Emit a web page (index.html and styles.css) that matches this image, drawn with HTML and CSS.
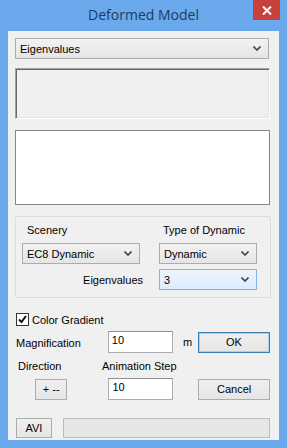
FILE: index.html
```html
<!DOCTYPE html>
<html lang="en">
<head>
    <meta charset="UTF-8">
    <title>Deformed Model</title>
    <link rel="stylesheet" href="styles.css">
</head>
<body>
    <div class="window">
        <div class="titlebar">
            <span class="title">Deformed Model</span>
            <div class="close">
                <svg width="10" height="9" viewBox="0 0 10 9"><path d="M1 0.5 L9 8.5 M9 0.5 L1 8.5" stroke="#fff" stroke-width="2"/></svg>
            </div>
        </div>
        <div class="client">
            <div class="combo combo-wide">
                <span>Eigenvalues</span>
                <svg class="chev" width="8" height="5" viewBox="0 0 8 5"><path d="M0.5 0.5 L4 4 L7.5 0.5" stroke="#444" stroke-width="1.6" fill="none"/></svg>
            </div>

            <div class="sunken"></div>

            <div class="listbox"></div>

            <div class="group">
                <div class="group-grid">
                    <span class="lbl lbl-scenery">Scenery</span>
                    <span class="lbl lbl-type">Type of Dynamic</span>
                    <div class="combo">
                        <span>EC8 Dynamic</span>
                        <svg class="chev" width="8" height="5" viewBox="0 0 8 5"><path d="M0.5 0.5 L4 4 L7.5 0.5" stroke="#444" stroke-width="1.6" fill="none"/></svg>
                    </div>
                    <div class="combo">
                        <span>Dynamic</span>
                        <svg class="chev" width="8" height="5" viewBox="0 0 8 5"><path d="M0.5 0.5 L4 4 L7.5 0.5" stroke="#444" stroke-width="1.6" fill="none"/></svg>
                    </div>
                    <span class="lbl lbl-eigen">Eigenvalues</span>
                    <div class="combo combo-focus">
                        <span>3</span>
                        <svg class="chev" width="8" height="5" viewBox="0 0 8 5"><path d="M0.5 0.5 L4 4 L7.5 0.5" stroke="#444" stroke-width="1.6" fill="none"/></svg>
                    </div>
                </div>
            </div>

            <div class="check-row">
                <span class="checkbox">
                    <svg width="11" height="11" viewBox="0 0 11 11"><path d="M2 5.5 L4.5 8 L9 2" stroke="#111" stroke-width="2" fill="none"/></svg>
                </span>
                <span>Color Gradient</span>
            </div>

            <div class="row row-mag">
                <span class="lbl-mag">Magnification</span>
                <div class="textbox">10</div>
                <span class="unit">m</span>
                <div class="btn btn-default">OK</div>
            </div>

            <div class="row row-labels">
                <span class="lbl-dir">Direction</span>
                <span class="lbl-step">Animation Step</span>
            </div>

            <div class="row row-btns">
                <div class="btn btn-dir">+ --</div>
                <div class="textbox">10</div>
                <div class="btn btn-cancel">Cancel</div>
            </div>

            <div class="row row-avi">
                <div class="btn btn-avi">AVI</div>
                <div class="progress"></div>
            </div>
        </div>
    </div>
</body>
</html>
```

FILE: styles.css
```css
* {
    margin: 0;
    padding: 0;
    box-sizing: border-box;
}

body {
    background: #6aa9ec;
    font-family: 'Liberation Sans', Arial, sans-serif;
    font-size: 11px;
    color: #000;
}

.window {
    width: 287px;
    height: 448px;
    background: #6aa9ec;
    display: flex;
    flex-direction: column;
}

.titlebar {
    height: 31px;
    position: relative;
    display: flex;
    justify-content: center;
    align-items: center;
    padding-bottom: 2px;
}

.title {
    font-family: 'Open Sans', 'Noto Sans', sans-serif;
    font-size: 14px;
    color: #1f3b5e;
}

.close {
    position: absolute;
    top: 0;
    right: 7px;
    width: 27px;
    height: 20px;
    background: #c7423d;
    display: flex;
    justify-content: center;
    align-items: center;
}

.client {
    flex: 1;
    margin: 0 8px 8px;
    background: #f0f0f0;
    padding: 7px 9px 0 7px;
    display: flex;
    flex-direction: column;
}

/* combo boxes */
.combo {
    height: 21px;
    border: 1px solid #acacac;
    background: linear-gradient(#f2f2f2, #e5e5e5);
    display: flex;
    align-items: center;
    justify-content: space-between;
    padding: 0 7px 0 4px;
}

.combo-wide {
    width: 254px;
}

.combo-focus {
    border-color: #7eb4ea;
    background: linear-gradient(#ecf4fc, #dcecfc);
}

.chev {
    display: block;
}

.sunken {
    width: 255px;
    height: 51px;
    margin-top: 9px;
    border: 1px solid;
    border-color: #a0a0a0 #ffffff #ffffff #a0a0a0;
    box-shadow: inset 1px 1px #696969, inset -1px -1px #e3e3e3;
}

.listbox {
    width: 255px;
    height: 75px;
    margin-top: 11px;
    background: #fff;
    border: 1px solid #828790;
}

/* group box */
.group {
    width: 256px;
    height: 82px;
    margin-top: 11px;
    border: 1px solid #dcdcdc;
    border-radius: 2px;
    padding: 4px 0 0 6px;
}

.group-grid {
    display: grid;
    grid-template-columns: 118px 98px;
    grid-template-rows: 17px 21px 21px;
    column-gap: 19px;
    row-gap: 5px;
    align-items: center;
}

.lbl-scenery {
    padding-left: 5px;
}

.lbl-type {
    padding-left: 4px;
}

.lbl-eigen {
    text-align: right;
    margin-right: -3px;
}

/* lower controls */
.check-row {
    display: flex;
    align-items: center;
    margin-top: 15px;
    padding-left: 1px;
    height: 13px;
}

.checkbox {
    width: 13px;
    height: 13px;
    border: 1px solid #333;
    background: #fff;
    display: flex;
    justify-content: center;
    align-items: center;
    margin-right: 3px;
}

.row {
    display: flex;
    align-items: center;
}

.textbox {
    width: 66px;
    height: 22px;
    background: #fff;
    border: 1px solid #abadb3;
    border-top-color: #8e8f8f;
    padding: 2px 0 0 3px;
    align-self: flex-start;
}

.btn {
    height: 21px;
    border: 1px solid #acacac;
    background: linear-gradient(#f0f0f0, #e5e5e5);
    display: flex;
    justify-content: center;
    align-items: center;
}

.btn-default {
    border-color: #3c7fb1;
    box-shadow: inset 0 0 0 1px #a7d0f0;
}

.row-mag {
    margin-top: 5px;
    height: 22px;
}

.lbl-mag {
    width: 94px;
    padding-left: 1px;
    padding-top: 2px;
}

.unit {
    margin-left: 10px;
    width: 15px;
}

.row-mag .btn {
    width: 73px;
}

.row-labels {
    margin-top: 6px;
    height: 14px;
}

.lbl-dir {
    width: 87px;
    padding-left: 3px;
}

.row-btns {
    margin-top: 5px;
    height: 22px;
}

.btn-dir {
    width: 33px;
    margin-left: 20px;
    margin-right: 41px;
}

.btn-cancel {
    width: 73px;
    margin-left: 25px;
}

.row-avi {
    margin-top: 18px;
}

.btn-avi {
    width: 36px;
    height: 20px;
    margin-left: 1px;
}

.progress {
    width: 209px;
    height: 20px;
    margin-left: 11px;
    border: 1px solid #bcbcbc;
    background: #e6e6e6;
}
```
